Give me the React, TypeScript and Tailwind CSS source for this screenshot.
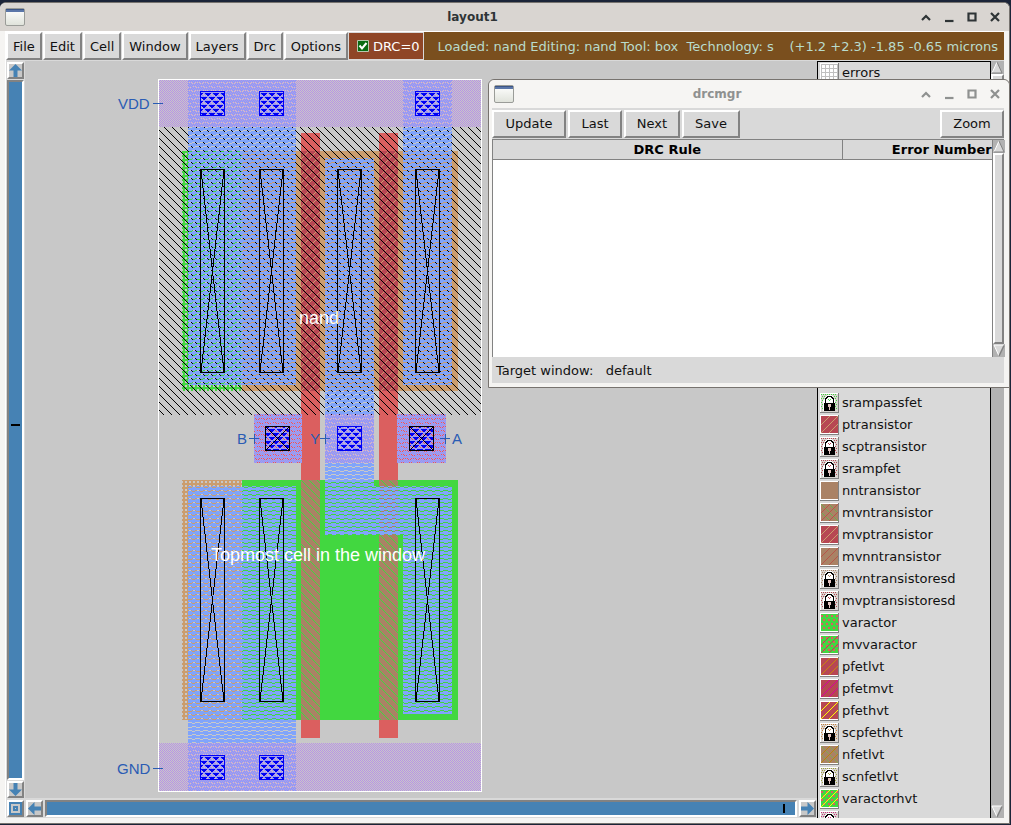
import React from "react";

const raised = "border-2 border-t-white border-l-white border-r-[#828282] border-b-[#828282] bg-[#d9d9d9]";

/* ---------- stipple patterns ---------- */

function diagonal(offset: number, rising: boolean): string {
  let d = "";
  for (let x = 0; x < 8; x++) {
    const y = rising ? (offset + 16 - x) % 8 : (offset + x) % 8;
    d += `M${x} ${y}h1v1h-1z`;
  }
  return d;
}

function Stipple({ id, size = 8, d, fill, base }: { id: string; size?: number; d: string; fill: string; base?: string }) {
  return (
    <pattern id={id} width={size} height={size} patternUnits="userSpaceOnUse">
      {base && <rect width={size} height={size} fill={base} />}
      <path d={d} fill={fill} />
    </pattern>
  );
}

const holes = "M0 0h4v1h-4zM0 3h4v1h-4zM0 1h1v2h-1zM3 1h1v2h-1z";
const metalDots = "M0 0h8v2h-8zM0 4h8v2h-8zM0 2h3v1h-3zM3 3h5v1h-5zM0 7h4v1h-4zM4 6h4v1h-4z";
const triangles = "M1 1h6v1h-6zM2 2h4v1h-4zM3 3h2v1h-2zM0 5h3v1h-3zM5 5h3v1h-3zM0 6h2v1h-2zM6 6h2v1h-2zM0 7h1v1h-1zM7 7h1v1h-1z";

type Box = [number, number, number, number];

function Boxes({ list, fill }: { list: Box[]; fill: string }) {
  return (
    <>
      {list.map(([x, y, w, h], i) => (
        <rect key={i} x={x} y={y} width={w} height={h} fill={fill} />
      ))}
    </>
  );
}

function Via({ x, y, crossed }: { x: number; y: number; crossed?: boolean }) {
  return (
    <g>
      <rect x={x} y={y} width="25" height="25" fill="url(#via)" />
      <rect x={x + 0.5} y={y + 0.5} width="24" height="24" fill="none" stroke={crossed ? "#000" : "#0000f5"} />
      {crossed && <path d={`M${x} ${y}l25 25M${x + 25} ${y}l-25 25`} stroke="#000" fill="none" />}
    </g>
  );
}

function LongContact({ x, y }: { x: number; y: number }) {
  return (
    <path
      d={`M${x + 0.5} ${y + 0.5}h24v203h-24zM${x + 1} ${y + 1}L${x + 24} ${y + 203}M${x + 24} ${y + 1}L${x + 1} ${y + 203}`}
      stroke="#000"
      fill="none"
    />
  );
}

function CellDrawing() {
  return (
    <svg
      width="470"
      height="736"
      viewBox="25 61 470 736"
      shapeRendering="crispEdges"
      className="block shrink-0"
      role="img"
      aria-label="nand"
    >
      <defs>
        <Stipple id="well" d={diagonal(3, false)} fill="#000" />
        <Stipple id="metal" d={metalDots} fill="#80a4fb" />
        <Stipple id="purple" size={2} d="M0 0h1v1h-1zM1 1h1v1h-1z" fill="#b892e6" />
        <Stipple id="nsub" size={4} d={holes} fill="#42d740" />
        <Stipple id="psub" size={4} d={holes} fill="#cb9d6e" />
        <Stipple id="pfet" d={diagonal(3, true)} fill="#cb9d6e" base="#b74753" />
        <Stipple id="nfet" d={diagonal(3, false)} fill="#42d740" base="#aa8265" />
        <Stipple id="via" d={triangles} fill="#0000f5" />
      </defs>

      <Boxes fill="#cb9d6e" list={[[242, 151, 216, 240]]} />
      <Boxes fill="url(#nsub)" list={[[182, 151, 60, 240]]} />
      <Boxes fill="url(#psub)" list={[[182, 480, 60, 240]]} />
      <Boxes fill="#42d740" list={[[242, 480, 216, 240]]} />
      <Boxes
        fill="#db5f5f"
        list={[[301, 133, 19, 605], [379, 133, 19, 605], [254, 414, 48, 49], [397, 414, 49, 49]]}
      />
      <Boxes fill="url(#pfet)" list={[[301, 151, 19, 240], [379, 151, 19, 240]]} />
      <Boxes fill="url(#nfet)" list={[[301, 480, 19, 240], [379, 480, 19, 240]]} />
      <Boxes fill="url(#well)" list={[[159, 127, 322, 288]]} />
      <Boxes
        fill="url(#metal)"
        list={[
          [188, 80, 108, 305],
          [403, 80, 49, 305],
          [325, 158, 49, 377],
          [374, 486, 29, 49],
          [403, 486, 49, 228],
          [188, 486, 108, 305],
          [254, 414, 48, 49],
          [397, 414, 49, 49],
        ]}
      />
      <Boxes
        fill="url(#purple)"
        list={[[159, 80, 322, 47], [159, 743, 322, 48], [254, 414, 48, 49], [325, 414, 49, 49], [397, 414, 49, 49]]}
      />

      {[200, 259, 415].map((x) => <Via key={x} x={x} y={91} />)}
      {[200, 259].map((x) => <Via key={x} x={x} y={755} />)}
      <Via x={337} y={426} />
      <Via x={265} y={426} crossed />
      <Via x={409} y={426} crossed />
      {[200, 259, 337, 415].map((x) => <LongContact key={x} x={x} y={169} />)}
      {[200, 259, 415].map((x) => <LongContact key={x} x={x} y={498} />)}

      <rect x="158.5" y="79.5" width="323" height="712" fill="none" stroke="#fff" />

      <path
        d="M153 103.5h10M153 768.5h10M249 438.5h10M254.500 434v10M320 438.500h10M325.500 434v10M440 438.500h10M445.500 434v10"
        stroke="#2a5cb4"
        fill="none"
      />
      <g fontFamily="'Liberation Sans', sans-serif" fontSize="15" fill="#2a5cb4">
        <text x="118" y="109">VDD</text>
        <text x="117" y="774">GND</text>
        <text x="237" y="444">B</text>
        <text x="310" y="444">Y</text>
        <text x="452" y="444">A</text>
      </g>
      <g fontFamily="'Liberation Sans', sans-serif" fontSize="18" fill="#fff">
        <text x="299" y="324">nand</text>
        <text x="211" y="561">Topmost cell in the window</text>
      </g>
    </svg>
  );
}

/* ---------- window furniture ---------- */

function WindowIcon() {
  return (
    <svg width="20" height="18" viewBox="0 0 20 18" aria-hidden="true">
      <defs>
        <linearGradient id="pane" x1="0" y1="0" x2="0" y2="1">
          <stop offset="0" stopColor="#fff" />
          <stop offset="1" stopColor="#dfe2da" />
        </linearGradient>
      </defs>
      <rect x="0.5" y="0.5" width="19" height="17" rx="1.500" fill="url(#pane)" stroke="#9a9c98" />
      <rect x="1" y="1" width="18" height="3" fill="#5b76a8" />
      <rect x="1" y="1" width="18" height="1" fill="#3c5585" />
    </svg>
  );
}

const windowGlyphs: { name: string; d: string }[] = [
  { name: "Shade", d: "M2 9L6 5L10 9" },
  { name: "Minimize", d: "M2 10H10.500" },
  { name: "Maximize", d: "M2.500 2.500H9.500V9.500H2.500Z" },
  { name: "Close", d: "M2 2L10 10M10 2L2 10" },
];

function TitleBar({ title, active }: { title: string; active: boolean }) {
  return (
    <header
      className={`flex h-7 shrink-0 items-center rounded-t-md pr-2 pl-[5px] ${
        active ? "bg-[#d9d5d1] text-[#2e3436]" : "bg-[#f6f5f3] text-[#8f9190]"
      }`}
    >
      <WindowIcon />
      <h1 className="flex-1 text-center text-[12px] leading-none font-bold">{title}</h1>
      <div className="flex gap-[11px]">
        {windowGlyphs.map((g) => (
          <button key={g.name} aria-label={g.name} className="h-3 w-3">
            <svg width="12" height="12" viewBox="0 0 12 12" fill="none" stroke="currentColor" strokeWidth="2.200" aria-hidden="true">
              <path d={g.d} />
            </svg>
          </button>
        ))}
      </div>
    </header>
  );
}

function ArrowButton({ label, angle }: { label: string; angle: number }) {
  return (
    <button
      aria-label={label}
      className="flex h-[17px] w-[17px] shrink-0 items-center justify-center border-2 border-t-white border-l-white border-r-[#828282] border-b-[#828282] bg-[#c8c8c8]"
    >
      <svg width="13" height="13" viewBox="0 0 13 13" className="shrink-0" aria-hidden="true">
        <path d="M6.500 0L13 6.500H8.500V13H4.500V6.500H0Z" fill="#4682b4" transform={`rotate(${angle} 6.5 6.5)`} />
      </svg>
    </button>
  );
}

function ScrollTriangle({ down }: { down?: boolean }) {
  return (
    <svg width="12" height="13" viewBox="0 0 12 13" className="block shrink-0" aria-hidden="true">
      <rect width="12" height="13" fill="#b2b2b2" />
      {down ? (
        <>
          <path d="M1 1H11L6 12Z" fill="#d9d9d9" />
          <path d="M6 12L1 1H11" stroke="#fff" fill="none" />
          <path d="M11 1.500L6 12" stroke="#828282" strokeWidth="1.500" fill="none" />
        </>
      ) : (
        <>
          <path d="M6 1L11 12H1Z" fill="#d9d9d9" />
          <path d="M1 12L6 1" stroke="#fff" fill="none" />
          <path d="M6 1L11 12H1" stroke="#828282" fill="none" />
        </>
      )}
    </svg>
  );
}

/* ---------- layer palette ---------- */

interface Layer {
  label: string;
  base: string;
  lines?: string;
  cross?: string;
  dots?: string;
  locked?: boolean;
}

const RED = "#b74753";
const BROWN = "#aa8265";
const GREEN = "#42d740";

const layers: Layer[] = [
  { label: "srampassfet", base: GREEN, locked: true },
  { label: "ptransistor", base: RED, lines: "#cb9d6e" },
  { label: "scptransistor", base: RED, locked: true },
  { label: "srampfet", base: RED, locked: true },
  { label: "nntransistor", base: BROWN },
  { label: "mvntransistor", base: BROWN, cross: "#6cae50", lines: "#b7564a" },
  { label: "mvptransistor", base: RED, lines: "#cb9d6e" },
  { label: "mvnntransistor", base: BROWN, lines: "#b7564a" },
  { label: "mvntransistoresd", base: BROWN, locked: true },
  { label: "mvptransistoresd", base: RED, locked: true },
  { label: "varactor", base: GREEN, dots: "#db5f5f" },
  { label: "mvvaractor", base: GREEN, dots: "#db5f5f", lines: "#b74753" },
  { label: "pfetlvt", base: RED, lines: "#c8860b" },
  { label: "pfetmvt", base: RED, lines: "#d800a0" },
  { label: "pfethvt", base: RED, lines: "#ffff00" },
  { label: "scpfethvt", base: "#c8803c", locked: true },
  { label: "nfetlvt", base: BROWN, lines: "#b8860b", cross: "#84a850" },
  { label: "scnfetlvt", base: "#9ca03c", locked: true },
  { label: "varactorhvt", base: GREEN, dots: "#db5f5f", lines: "#ffff00" },
  { label: "nsonos", base: "#c8307c", locked: true },
];

function Swatch({ layer }: { layer: Layer }) {
  const dots = [];
  for (let r = 0; r < 4; r++) {
    for (let c = 0; c < 4; c++) {
      dots.push(<rect key={`${r}${c}`} x={(r % 2) * 2 + c * 5} y={1 + r * 4} width="2" height="2" fill={layer.dots} />);
    }
  }
  const weave = [];
  for (let y = 0; y < 16; y += 2) {
    for (let x = 0; x < 16; x += 2) {
      weave.push(<rect key={`${x}-${y}`} x={x + ((y / 2) % 2)} y={y} width="1" height="1" fill={layer.base} />);
    }
  }
  return (
    <svg width="19" height="20" viewBox="-1 -1 19 20" shapeRendering="crispEdges" className="shrink-0" aria-hidden="true">
      <path d="M-1 -1H18V19H-1Z" fill="#fff" />
      <path d="M17 -1H18V19H-1V18H17Z" fill="#828282" />
      {layer.locked ? (
        <>
          <rect width="17" height="18" fill="#d8d4d0" />
          {weave}
          <path d="M3 6L6 1H11L14 6V17H2V6Z" fill="#fff" />
          <path d="M3 9H14V17H3Z" fill="#000" />
          <path d="M4.500 9V5.500L7 2.500H10L12.500 5.500V9" stroke="#000" strokeWidth="1.500" fill="none" />
          <path d="M7 5h1v1h-1zM9 5h1v1h-1zM8 6h1v1h-1z" fill={layer.base} />
          <path d="M7 10h3v3h-3zM8 13h1v3h-1z" fill="#e4c4c0" />
        </>
      ) : (
        <>
          <rect width="17" height="17" fill={layer.base} />
          {layer.dots && dots}
          {layer.cross && <path d="M0 0L17 17M0 8L9 17M8 0L17 9" stroke={layer.cross} fill="none" />}
          {layer.lines && <path d="M0 9L9 0M0 17L17 0M8 17L17 8" stroke={layer.lines} fill="none" />}
        </>
      )}
    </svg>
  );
}

function GridSwatch() {
  return (
    <svg width="19" height="20" viewBox="0 0 19 20" shapeRendering="crispEdges" className="shrink-0" aria-hidden="true">
      <rect width="19" height="20" fill="#828282" />
      <rect width="18" height="19" fill="#fff" />
      <path
        d="M1 1.500H18M1 5.500H18M1 9.500H18M1 13.500H18M1 17.500H18M1.500 1V18M5.500 1V18M9.500 1V18M13.500 1V18M17.500 1V18"
        stroke="#c0c0c0"
        fill="none"
      />
    </svg>
  );
}

const rowClass = "flex h-[22px] w-full shrink-0 items-center gap-[3px] text-left leading-[22px]";

function LayerPanel() {
  return (
    <aside className="flex w-[187px] shrink-0">
      <div className="flex min-h-0 flex-1 flex-col overflow-hidden border-t border-r border-l border-black bg-[#d9d9d9] pl-[2px]">
        <button className={rowClass}>
          <GridSwatch />
          errors
        </button>
        <div className="h-[308px] shrink-0" />
        {layers.map((layer) => (
          <button key={layer.label} className={rowClass}>
            <Swatch layer={layer} />
            {layer.label}
          </button>
        ))}
      </div>
      <div className="flex w-[13px] flex-col bg-[#b2b2b2]">
        <ScrollTriangle />
        <div className={`h-[120px] ${raised}`} />
        <div className="flex-1" />
        <ScrollTriangle down />
      </div>
    </aside>
  );
}

/* ---------- windows ---------- */

const menus = ["File", "Edit", "Cell", "Window", "Layers", "Drc", "Options"];

function LayoutWindow() {
  return (
    <section className="flex h-full flex-col rounded-t-md border-t border-r border-b border-[#77736f] bg-[#f5f4f2]">
      <TitleBar title="layout1" active />
      <div className="mr-[5px] mb-[5px] ml-[5px] flex min-h-0 flex-1 flex-col border-t border-l border-white bg-[#d9d9d9]">
        <div className="flex h-[29px] shrink-0 pb-px">
          <nav className="flex gap-px">
            {menus.map((m) => (
              <button key={m} className={`px-[5px] ${raised}`}>
                {m}
              </button>
            ))}
          </nav>
          <label className="flex items-center gap-1 border border-[#d9d9d9] bg-[#8f4627] pr-[3px] pl-2 text-white">
            <input type="checkbox" defaultChecked className="peer sr-only" />
            <svg width="12" height="12" viewBox="0 0 12 12" className="shrink-0" aria-hidden="true">
              <path d="M0.500 0.500H11.500V11.500H0.500Z" fill="#0a6b12" stroke="#b8c8b0" />
              <path d="M2.500 5.500L5 8.500L9.500 3" stroke="#fff" strokeWidth="2" fill="none" />
            </svg>
            DRC=0
          </label>
          <div className="flex flex-1 items-center justify-between overflow-hidden bg-[#7a4f1e] pr-[6px] pl-[14px] whitespace-pre text-[#b9dccd]">
            <span>{"Loaded: nand Editing: nand Tool: box  Technology: s"}</span>
            <span>(+1.2 +2.3) -1.85 -0.65 microns</span>
          </div>
        </div>
        <div className="flex min-h-0 flex-1">
          <div className="flex min-w-0 flex-1 flex-col">
            <div className="flex min-h-0 flex-1">
              <div className="flex w-[19px] shrink-0 flex-col items-center gap-px pt-px">
                <ArrowButton label="Scroll up" angle={0} />
                <div className="flex w-[17px] flex-1 items-center border-2 border-t-[#828282] border-r-white border-b-white border-l-[#828282] bg-[#4682b4] px-[2px] pb-[10px]">
                  <div className="h-[2px] w-full bg-black" />
                </div>
                <ArrowButton label="Scroll down" angle={180} />
              </div>
              <div className="flex min-w-0 flex-1 overflow-hidden bg-[#c8c8c8]">
                <CellDrawing />
              </div>
            </div>
            <div className="flex h-[20px] shrink-0 items-center gap-[2px] px-px">
              <button
                aria-label="Zoom to cell"
                className="flex h-[17px] w-[17px] shrink-0 items-center justify-center border-2 border-t-white border-l-white border-r-[#828282] border-b-[#828282] bg-[#c8c8c8]"
              >
                <svg width="13" height="13" viewBox="0 0 13 13" fill="none" stroke="#4682b4" strokeWidth="2" className="shrink-0" aria-hidden="true">
                  <path d="M1 1H12V12H1Z" />
                  <path d="M5 5H8V8H5Z" />
                </svg>
              </button>
              <ArrowButton label="Scroll left" angle={270} />
              <div className="flex h-[17px] flex-1 items-center justify-end border-2 border-t-[#828282] border-r-white border-b-white border-l-[#828282] bg-[#4682b4] pr-[10px]">
                <div className="h-[9px] w-[2px] bg-black" />
              </div>
              <ArrowButton label="Scroll right" angle={90} />
            </div>
          </div>
          <LayerPanel />
        </div>
      </div>
    </section>
  );
}

function DrcWindow() {
  return (
    <section className="absolute top-[79px] right-px flex h-[309px] w-[522px] flex-col rounded-t-md border border-[#77736f] bg-[#f5f4f2]">
      <TitleBar title="drcmgr" active={false} />
      <div className="mr-[5px] mb-[4px] ml-[3px] flex min-h-0 flex-1 flex-col bg-[#d9d9d9]">
        <div className="flex h-8 shrink-0 items-center gap-[2px] border-b border-[#828282]">
          <button className={`h-7 w-[74px] ${raised}`}>Update</button>
          <button className={`h-7 w-[54px] ${raised}`}>Last</button>
          <button className={`h-7 w-[56px] ${raised}`}>Next</button>
          <button className={`h-7 w-[58px] ${raised}`}>Save</button>
          <button className={`ml-auto h-7 w-[64px] ${raised}`}>Zoom</button>
        </div>
        <div className="flex min-h-0 flex-1 bg-white">
          <div className="flex-1 overflow-hidden border-l border-[#828282]">
            <table className="w-[548px] table-fixed border-collapse leading-none font-bold text-black">
              <thead>
                <tr className="h-[19px] bg-[#d9d9d9]">
                  <th scope="col" className="w-[349px] border-r border-b border-[#828282] p-0">DRC Rule</th>
                  <th scope="col" className="border-b border-[#828282] p-0">Error Number</th>
                </tr>
              </thead>
              <tbody />
            </table>
          </div>
          <div className="flex w-3 flex-col border-l border-[#828282]">
            <ScrollTriangle />
            <div className={`flex-1 ${raised}`} />
            <ScrollTriangle down />
          </div>
        </div>
        <p className="flex h-[26px] shrink-0 items-center pl-1 whitespace-pre">{"Target window:   default"}</p>
      </div>
    </section>
  );
}

export default function App() {
  return (
    <main className="relative h-screen overflow-hidden bg-[#1b2438] pt-[2px] pr-px pb-px font-['DejaVu_Sans',sans-serif] text-[13px] leading-none text-[#111]">
      <LayoutWindow />
      <DrcWindow />
    </main>
  );
}
